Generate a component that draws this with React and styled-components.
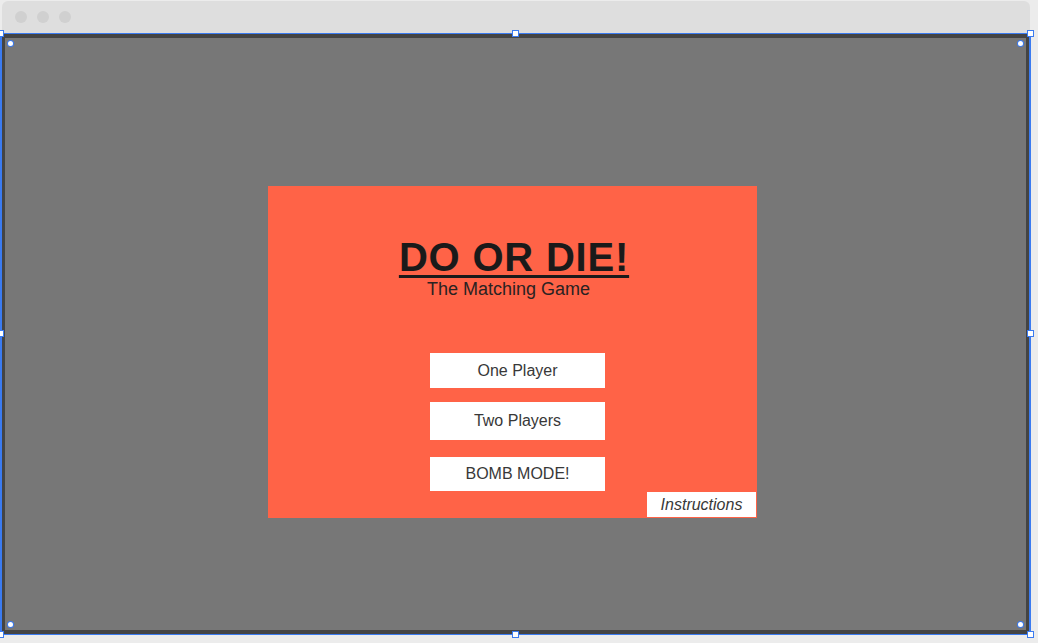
import React from 'react';
import styled, {createGlobalStyle} from 'styled-components';

const GlobalStyle = createGlobalStyle`
  html, body {
    margin: 0;
    padding: 0;
    background: #ececec;
    font-family: "Liberation Sans", Arial, sans-serif;
  }
`;

const Page = styled.div`
  position: relative;
  width: 1038px;
  height: 643px;
  padding-top: 1px;
  box-sizing: border-box;
`;

const TitleBar = styled.div`
  height: 32px;
  margin-left: 2px;
  width: 1028px;
  background: #dedede;
  border-radius: 6px 6px 0 0;
  display: flex;
  align-items: center;
  gap: 10px;
  padding-left: 13px;
  box-sizing: border-box;
`;

const Dot = styled.span`
  width: 12px;
  height: 12px;
  border-radius: 50%;
  background: #d0d0d0;
`;

const Stage = styled.div`
  position: relative;
  width: 1031px;
  box-sizing: border-box;
  border-style: solid;
  border-color: #3b7bf0;
  border-width: 1px 2px 1px 2px;
`;

const Screen = styled.div`
  height: 600px;
  box-sizing: border-box;
  border-style: solid;
  border-color: #444444;
  border-width: 4px 3px 4px 3px;
  background: #777777;
  padding: 148px 0 0 263px;
`;

const Panel = styled.div`
  width: 489px;
  height: 332px;
  box-sizing: border-box;
  background: #ff6347;
  display: flex;
  flex-direction: column;
  padding: 50px 1px 1px 0;
`;

const Title = styled.h1`
  margin: 0;
  padding-left: 4px;
  text-align: center;
  font-size: 40px;
  line-height: 42px;
  font-weight: 700;
  letter-spacing: 0.8px;
  color: #1a1a1a;
  text-decoration: underline;
  text-decoration-thickness: 3px;
  text-underline-offset: 4px;
`;

const Subtitle = styled.div`
  padding: 1px 7px 0 0;
  text-align: center;
  font-size: 18px;
  line-height: 20px;
  color: #2a2222;
`;

const Menu = styled.div`
  display: flex;
  flex-direction: column;
  margin: 54px 0 0 162px;
`;

const MenuButton = styled.button`
  width: 175px;
  height: ${p => p.$h}px;
  margin-top: ${p => p.$gap}px;
  border: none;
  background: #ffffff;
  color: #383838;
  font-family: "Liberation Sans", Arial, sans-serif;
  font-size: 16px;
  padding: 0;
  cursor: pointer;
`;

const InstructionsButton = styled.button`
  align-self: flex-end;
  margin-top: auto;
  width: 109px;
  height: 25px;
  border: none;
  background: #ffffff;
  color: #383838;
  font-family: "Liberation Sans", Arial, sans-serif;
  font-style: italic;
  font-size: 16px;
  padding: 0;
`;

const Handle = styled.span`
  position: absolute;
  left: ${p => p.$x - 3.5}px;
  top: ${p => p.$y - 3.5}px;
  width: 7px;
  height: 7px;
  box-sizing: border-box;
  background: #ffffff;
  border: 1px solid #3b7bf0;
`;

const Pin = styled.span`
  position: absolute;
  left: ${p => p.$x - 2.5}px;
  top: ${p => p.$y - 2.5}px;
  width: 5px;
  height: 5px;
  border-radius: 50%;
  background: #ffffff;
  box-shadow: 0 0 0 1px #3b7bf0;
`;

const handles = [
    [0, 33.5], [515.5, 33.5], [1030.5, 33.5],
    [0, 333.5], [1030.5, 333.5],
    [0, 634.5], [515.5, 634.5], [1030.5, 634.5],
];

const pins = [[10.5, 43.5], [1020.5, 43.5], [10.5, 624.5], [1020.5, 624.5]];

export default function App() {
    return (
        <Page>
            <GlobalStyle/>
            <TitleBar>
                <Dot/><Dot/><Dot/>
            </TitleBar>
            <Stage>
                <Screen>
                    <Panel>
                        <Title>DO OR DIE!</Title>
                        <Subtitle>The Matching Game</Subtitle>
                        <Menu>
                            <MenuButton $h={35} $gap={0}>One Player</MenuButton>
                            <MenuButton $h={38} $gap={14}>Two Players</MenuButton>
                            <MenuButton $h={34} $gap={17}>BOMB MODE!</MenuButton>
                        </Menu>
                        <InstructionsButton>Instructions</InstructionsButton>
                    </Panel>
                </Screen>
            </Stage>
            {handles.map(([x, y], i) => <Handle key={i} $x={x} $y={y}/>)}
            {pins.map(([x, y], i) => <Pin key={i} $x={x} $y={y}/>)}
        </Page>
    );
}
